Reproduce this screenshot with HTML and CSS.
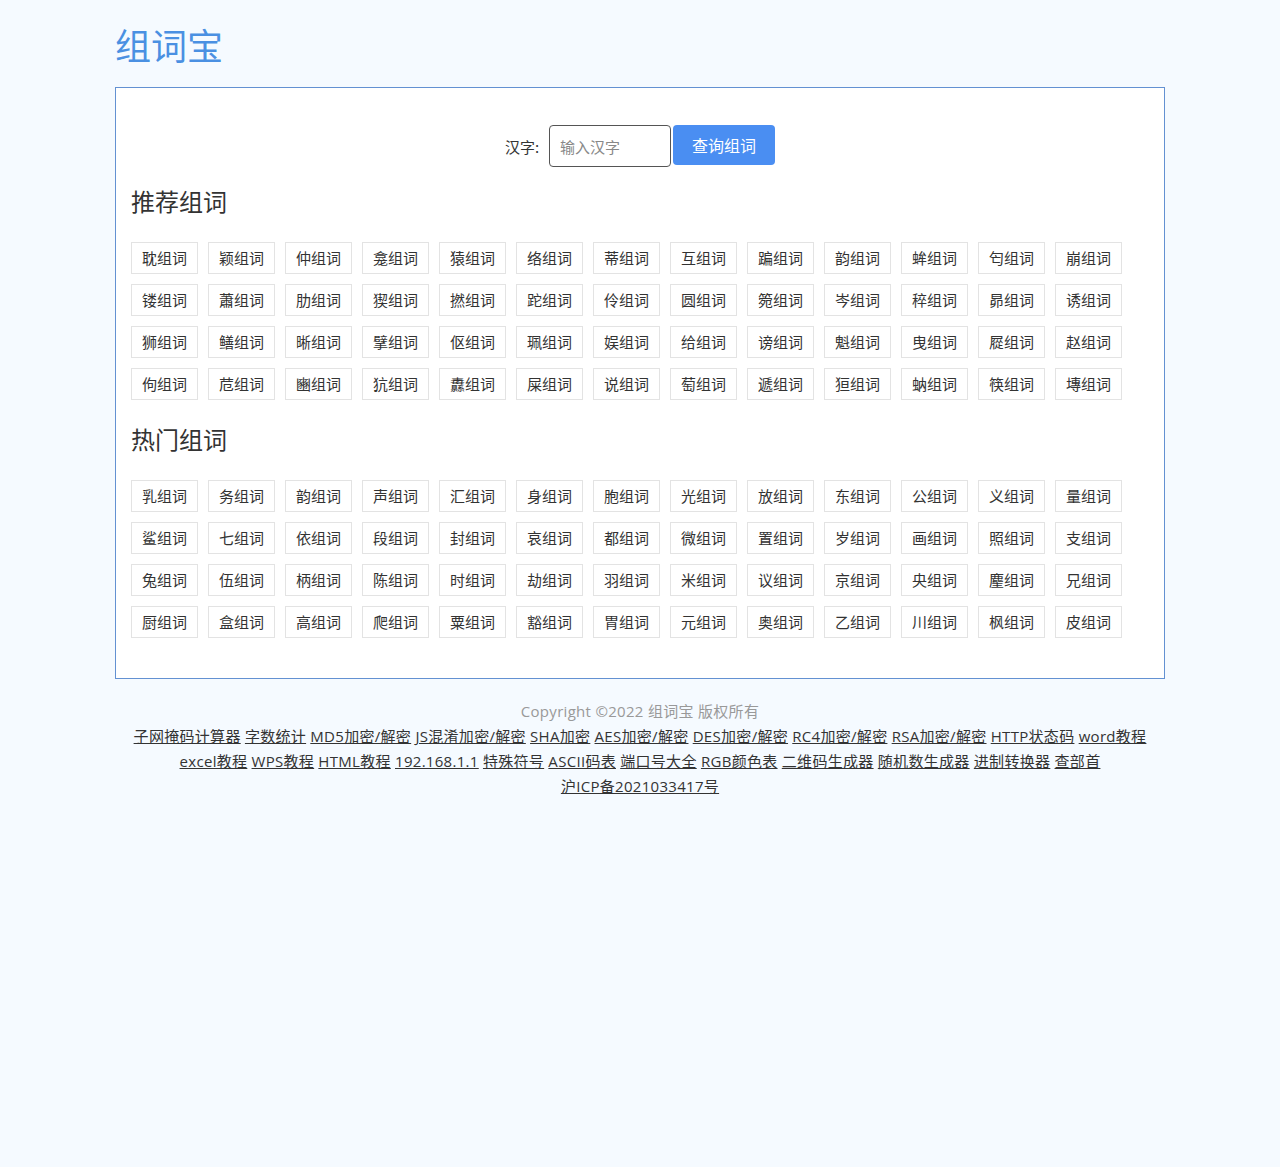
FILE: index.html
```html
<!DOCTYPE html>
<html lang="zh-CN">
<head>
<meta charset="utf-8">
<title>组词宝</title>
<link rel="stylesheet" href="styles.css">
</head>
<body>
<div class="wrap">
  <header class="site-header"><a class="logo" href="#">组词宝</a></header>
  <main class="panel">
    <form class="search">
      <label class="search-label">汉字:</label>
      <input class="search-input" type="text" placeholder="输入汉字">
      <button class="search-btn" type="button">查询组词</button>
    </form>
    <h2 class="section-title">推荐组词</h2>
    <div class="tags">
      <a class="tag">耽组词</a><a class="tag">颖组词</a><a class="tag">仲组词</a><a class="tag">龛组词</a><a class="tag">猿组词</a><a class="tag">络组词</a><a class="tag">蒂组词</a><a class="tag">互组词</a><a class="tag">蹁组词</a><a class="tag">韵组词</a><a class="tag">蛑组词</a><a class="tag">匄组词</a><a class="tag">崩组词</a>
      <a class="tag">镂组词</a><a class="tag">蕭组词</a><a class="tag">肋组词</a><a class="tag">猰组词</a><a class="tag">撚组词</a><a class="tag">跎组词</a><a class="tag">伶组词</a><a class="tag">圆组词</a><a class="tag">箢组词</a><a class="tag">岑组词</a><a class="tag">稡组词</a><a class="tag">昴组词</a><a class="tag">诱组词</a>
      <a class="tag">狮组词</a><a class="tag">鳝组词</a><a class="tag">晰组词</a><a class="tag">擘组词</a><a class="tag">伛组词</a><a class="tag">珮组词</a><a class="tag">娱组词</a><a class="tag">给组词</a><a class="tag">谤组词</a><a class="tag">魁组词</a><a class="tag">曳组词</a><a class="tag">㞞组词</a><a class="tag">赵组词</a>
      <a class="tag">佝组词</a><a class="tag">苊组词</a><a class="tag">豳组词</a><a class="tag">犺组词</a><a class="tag">纛组词</a><a class="tag">屎组词</a><a class="tag">说组词</a><a class="tag">萄组词</a><a class="tag">遞组词</a><a class="tag">狟组词</a><a class="tag">蚋组词</a><a class="tag">筷组词</a><a class="tag">塼组词</a>
    </div>
    <h2 class="section-title">热门组词</h2>
    <div class="tags">
      <a class="tag">乳组词</a><a class="tag">务组词</a><a class="tag">韵组词</a><a class="tag">声组词</a><a class="tag">汇组词</a><a class="tag">身组词</a><a class="tag">胞组词</a><a class="tag">光组词</a><a class="tag">放组词</a><a class="tag">东组词</a><a class="tag">公组词</a><a class="tag">义组词</a><a class="tag">量组词</a>
      <a class="tag">鲨组词</a><a class="tag">七组词</a><a class="tag">依组词</a><a class="tag">段组词</a><a class="tag">封组词</a><a class="tag">哀组词</a><a class="tag">都组词</a><a class="tag">微组词</a><a class="tag">置组词</a><a class="tag">岁组词</a><a class="tag">画组词</a><a class="tag">照组词</a><a class="tag">支组词</a>
      <a class="tag">兔组词</a><a class="tag">伍组词</a><a class="tag">柄组词</a><a class="tag">陈组词</a><a class="tag">时组词</a><a class="tag">劫组词</a><a class="tag">羽组词</a><a class="tag">米组词</a><a class="tag">议组词</a><a class="tag">京组词</a><a class="tag">央组词</a><a class="tag">麈组词</a><a class="tag">兄组词</a>
      <a class="tag">厨组词</a><a class="tag">盒组词</a><a class="tag">高组词</a><a class="tag">爬组词</a><a class="tag">粟组词</a><a class="tag">豁组词</a><a class="tag">胃组词</a><a class="tag">元组词</a><a class="tag">奥组词</a><a class="tag">乙组词</a><a class="tag">川组词</a><a class="tag">枫组词</a><a class="tag">皮组词</a>
    </div>
  </main>
  <footer class="footer">
    <p class="copyright">Copyright ©2022 组词宝 版权所有</p>
    <p class="links">
      <a href="#">子网掩码计算器</a> <a href="#">字数统计</a> <a href="#">MD5加密/解密</a> <a href="#">JS混淆加密/解密</a> <a href="#">SHA加密</a> <a href="#">AES加密/解密</a> <a href="#">DES加密/解密</a> <a href="#">RC4加密/解密</a> <a href="#">RSA加密/解密</a> <a href="#">HTTP状态码</a> <a href="#">word教程</a><br>
      <a href="#">excel教程</a> <a href="#">WPS教程</a> <a href="#">HTML教程</a> <a href="#">192.168.1.1</a> <a href="#">特殊符号</a> <a href="#">ASCII码表</a> <a href="#">端口号大全</a> <a href="#">RGB颜色表</a> <a href="#">二维码生成器</a> <a href="#">随机数生成器</a> <a href="#">进制转换器</a> <a href="#">查部首</a>
    </p>
    <p class="icp"><a href="#">沪ICP备2021033417号</a></p>
  </footer>
</div>
</body>
</html>
```
FILE: styles.css
```css
* { box-sizing: border-box; }
html, body {
  margin: 0;
  padding: 0;
  background: #f5faff;
  font-family: "Open Sans", "Noto Sans CJK SC", sans-serif;
  color: #333;
}
.wrap {
  width: 1050px;
  margin: 0 auto;
}
.site-header {
  height: 87px;
  padding-top: 20px;
}
.logo {
  display: inline-block;
  font-family: "Noto Sans CJK SC", sans-serif;
  font-size: 36px;
  line-height: 48px;
  color: #4a90e2;
  text-decoration: none;
}
.panel {
  background: #fff;
  border: 1px solid #6391d2;
  padding: 37px 15px 40px;
}
.search {
  display: flex;
  justify-content: center;
  align-items: center;
  margin: 0;
}
.search-label {
  font-family: "Noto Sans CJK SC", sans-serif;
  font-size: 15px;
  color: #333;
  margin-right: 10px;
}
.search-input {
  width: 122px;
  height: 42px;
  border: 1px solid #555;
  border-radius: 4px;
  padding: 0 10px;
  font-family: "Noto Sans CJK SC", sans-serif;
  font-size: 15px;
  color: #333;
  outline: none;
}
.search-input::placeholder { color: #888; }
.search-btn {
  align-self: flex-start;
  width: 102px;
  height: 40px;
  margin-left: 2px;
  border: none;
  border-radius: 4px;
  background: #4a8ef2;
  color: #fff;
  font-family: "Noto Sans CJK SC", sans-serif;
  font-size: 16px;
}
.section-title {
  margin: 16px 0 23px;
  font-family: "Noto Sans CJK SC", sans-serif;
  font-weight: normal;
  font-size: 24px;
  line-height: 36px;
  color: #333;
}
.tags {
  display: flex;
  flex-wrap: wrap;
  gap: 10px;
  width: 1000px;
}
.tags + .section-title { margin-top: 21px; }
.tag {
  display: block;
  width: 67px;
  height: 32px;
  line-height: 30px;
  text-align: center;
  border: 1px solid #e3e3e3;
  font-family: "Noto Sans CJK SC", sans-serif;
  font-size: 15px;
  color: #333;
  text-decoration: none;
  white-space: nowrap;
}
.footer {
  text-align: center;
  padding-top: 20px;
  font-size: 15px;
  line-height: 25px;
  letter-spacing: 0.3px;
}
.footer p { margin: 0; }
.copyright { color: #999; }
.footer a { color: #333; text-decoration: underline; }
```
